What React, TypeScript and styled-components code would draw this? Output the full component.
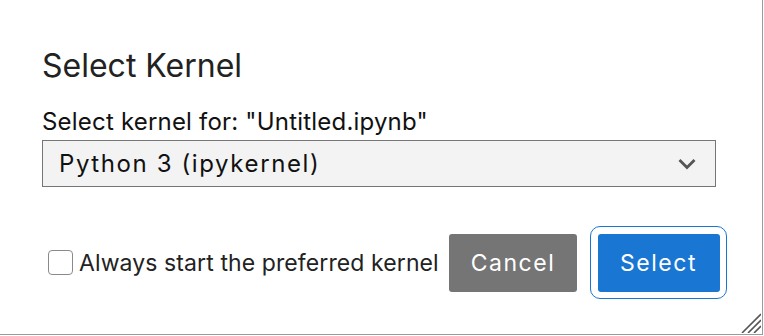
import React from "react";
import styled, { createGlobalStyle } from "styled-components";

const GlobalStyle = createGlobalStyle`
  body {
    margin: 0;
    background: #fff;
    font-family: "Inter", "Liberation Sans", sans-serif;
    color: #222;
  }
`;

const Dialog = styled.div`
  position: relative;
  width: 763px;
  height: 335px;
  box-sizing: border-box;
  border-right: 1px solid #9b9b9b;
  border-bottom: 1px solid #9b9b9b;
  padding: 46px 0 0 42px;
  display: flex;
  flex-direction: column;
`;

const Title = styled.h1`
  margin: 0;
  font-size: 32px;
  line-height: 40px;
  font-weight: 400;
  color: #222;
`;

const Label = styled.label`
  margin-top: 22px;
  font-size: 24px;
  line-height: 28px;
  letter-spacing: 0.2px;
  color: #111;
`;

const SelectBox = styled.div`
  margin-top: 4px;
  width: 674px;
  height: 47px;
  box-sizing: border-box;
  border: 1px solid #767676;
  background: #f3f3f3;
  display: flex;
  align-items: center;
  justify-content: space-between;
  padding: 0 19px 0 16px;
  font-size: 24px;
  letter-spacing: 1.6px;
  color: #111;
`;

const Footer = styled.div`
  margin-top: 39px;
  width: 685px;
  display: flex;
  align-items: center;
  justify-content: space-between;
`;

const CheckRow = styled.label`
  display: flex;
  align-items: center;
  gap: 6px;
  font-size: 23px;
  letter-spacing: 0.1px;
  color: #222;
  margin-left: 6px;
`;

const Box = styled.span`
  width: 25px;
  height: 25px;
  box-sizing: border-box;
  border: 1px solid #8a8a8a;
  border-radius: 4px;
  background: #fff;
`;

const Buttons = styled.div`
  display: flex;
  align-items: center;
  gap: 13px;
`;

const Button = styled.button<{ $primary?: boolean }>`
  height: 58px;
  width: ${(p) => (p.$primary ? "122px" : "128px")};
  padding: 0;
  border: none;
  border-radius: 3px;
  background: ${(p) => (p.$primary ? "#1976d2" : "#757575")};
  color: #fff;
  font-family: inherit;
  font-size: 23px;
  letter-spacing: 1.5px;
`;

const FocusRing = styled.div`
  padding: 6.5px;
  border: 1.5px solid #1976d2;
  border-radius: 10px;
  display: flex;
`;

const Grip = styled.svg`
  position: absolute;
  right: 1px;
  bottom: 1px;
`;

export default function App() {
  return (
    <>
      <GlobalStyle />
      <Dialog>
        <Title>Select Kernel</Title>
        <Label>Select kernel for: "Untitled.ipynb"</Label>
        <SelectBox>
          <span>Python 3 (ipykernel)</span>
          <svg width="18" height="12" viewBox="0 0 18 12">
            <path d="M1.5 2 L9 9.5 L16.5 2" fill="none" stroke="#555" strokeWidth="2.8" />
          </svg>
        </SelectBox>
        <Footer>
          <CheckRow>
            <Box />
            Always start the preferred kernel
          </CheckRow>
          <Buttons>
            <Button>Cancel</Button>
            <FocusRing>
              <Button $primary>Select</Button>
            </FocusRing>
          </Buttons>
        </Footer>
        <Grip width="20" height="20" viewBox="0 0 20 20">
          <path d="M20 1 L1 20 M20 7 L7 20 M20 13 L13 20" stroke="#555" strokeWidth="1.6" />
        </Grip>
      </Dialog>
    </>
  );
}
